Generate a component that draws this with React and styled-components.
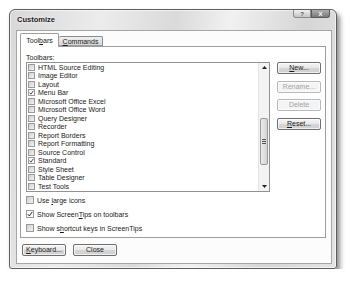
import styled, { createGlobalStyle } from "styled-components";

const Global = createGlobalStyle`
  body {
    margin: 0;
    background: #fff;
    font-family: "Liberation Sans", Arial, sans-serif;
    color: #1a1a1a;
  }
`;

const toolbars = [
  { name: "HTML Source Editing" },
  { name: "Image Editor" },
  { name: "Layout" },
  { name: "Menu Bar", on: true },
  { name: "Microsoft Office Excel" },
  { name: "Microsoft Office Word" },
  { name: "Query Designer" },
  { name: "Recorder" },
  { name: "Report Borders" },
  { name: "Report Formatting" },
  { name: "Source Control" },
  { name: "Standard", on: true },
  { name: "Style Sheet" },
  { name: "Table Designer" },
  { name: "Test Tools" },
];

const Page = styled.div`
  padding: 9px 0 0 9px;
`;

const Window = styled.div`
  width: 328px;
  height: 260px;
  box-sizing: border-box;
  border: 1px solid #5e5e5e;
  border-radius: 6px 6px 3px 3px;
  background: linear-gradient(
    100deg,
    #d8d8d8 0%,
    #ececec 25%,
    #dadada 45%,
    #f1f1f1 60%,
    #d6d6d6 80%,
    #e4e4e4 100%
  );
  box-shadow: 3px 4px 5px rgba(0, 0, 0, 0.45), inset 0 0 0 1px rgba(255, 255, 255, 0.6);
  display: flex;
  flex-direction: column;
  padding: 0 4px 4px 6px;
`;

const TitleBar = styled.div`
  height: 20px;
  display: flex;
  align-items: flex-start;
  justify-content: space-between;
`;

const Title = styled.div`
  padding: 5px 0 0 1px;
  font-size: 7.5px;
  font-weight: 700;
  line-height: 9px;
  color: #1c1c1c;
  text-shadow: 0 0 3px #fff;
`;

const Caption = styled.div`
  display: flex;
  margin-right: 2px;
`;

const CaptionButton = styled.div`
  width: ${({ w }) => w}px;
  height: 8px;
  box-sizing: border-box;
  border: 1px solid ${({ close }) => (close ? "#5a5a5a" : "#8c8c8c")};
  border-top: none;
  border-radius: ${({ close }) => (close ? "0 0 3px 0" : "0 0 0 3px")};
  background: ${({ close }) =>
    close ? "linear-gradient(#b0b0b0, #7a7a7a)" : "linear-gradient(#f0f0f0, #c4c4c4)"};
  display: flex;
  align-items: center;
  justify-content: center;
  font-size: 6px;
  font-weight: 700;
  color: ${({ close }) => (close ? "#fff" : "#555")};
  line-height: 6px;
`;

const Client = styled.div`
  flex: 1;
  border: 1px solid #a6a6a6;
  background: #fcfcfc;
  padding: 2px 5px 0 3px;
  display: flex;
  flex-direction: column;
`;

const Tabs = styled.div`
  height: 13px;
  display: flex;
  align-items: flex-end;
`;

const Tab = styled.div`
  box-sizing: border-box;
  width: ${({ w }) => w}px;
  height: ${({ active }) => (active ? 14 : 10)}px;
  margin-bottom: ${({ active }) => (active ? -1 : 0)}px;
  position: relative;
  z-index: ${({ active }) => (active ? 1 : 0)};
  border: 1px solid ${({ active }) => (active ? "#9d9d9d" : "#8a8a8a")};
  border-bottom: ${({ active }) => (active ? "none" : "1px solid #9d9d9d")};
  border-left: ${({ active }) => (active ? "1px solid #9d9d9d" : "none")};
  border-radius: 2px 2px 0 0;
  background: ${({ active }) => (active ? "#fff" : "linear-gradient(#f0f0f0, #d6d6d6)")};
  font-size: 7px;
  line-height: ${({ active }) => (active ? 13 : 9)}px;
  text-align: center;
`;

const Panel = styled.div`
  height: 192px;
  box-sizing: border-box;
  border: 1px solid #9d9d9d;
  background: #fff;
  padding: 6px 4px 0 5px;
  display: flex;
  flex-direction: column;
`;

const Label = styled.div`
  font-size: 7px;
  line-height: 9px;
  height: 9px;
`;

const ListArea = styled.div`
  display: flex;
  gap: 7px;
`;

const List = styled.div`
  width: 244px;
  height: 130px;
  box-sizing: border-box;
  border: 1px solid #8f9396;
  display: flex;
`;

const Items = styled.div`
  flex: 1;
  padding-left: 1px;
`;

const Item = styled.div`
  height: 8.53px;
  display: flex;
  align-items: center;
  gap: 3px;
  font-size: 7px;
  white-space: nowrap;
`;

const Box = styled.div`
  width: ${({ size }) => size}px;
  height: ${({ size }) => size}px;
  box-sizing: border-box;
  flex: none;
  border: 1px solid #9a9a9a;
  background: ${({ on }) => (on ? "#fafafa" : "linear-gradient(135deg, #cfcfcf, #f3f3f3)")};
  display: flex;
  align-items: center;
  justify-content: center;
`;

const Scrollbar = styled.div`
  width: 10px;
  display: flex;
  flex-direction: column;
  background: #f3f3f3;
  border-left: 1px solid #e4e4e4;
`;

const Arrow = styled.div`
  height: 9px;
  display: flex;
  align-items: center;
  justify-content: center;
`;

const Track = styled.div`
  flex: 1;
  padding-top: 46px;
`;

const Thumb = styled.div`
  height: 47px;
  margin: 0 1px;
  box-sizing: border-box;
  border: 1px solid #9a9a9a;
  border-radius: 2px;
  background: linear-gradient(90deg, #ececec, #d2d2d2);
  display: flex;
  align-items: center;
  justify-content: center;
`;

const Grip = styled.div`
  width: 4px;
  height: 5px;
  background: repeating-linear-gradient(#555 0 1px, transparent 1px 2px);
`;

const Side = styled.div`
  display: flex;
  flex-direction: column;
  gap: 6.5px;
`;

const Button = styled.div`
  width: 44px;
  height: 12px;
  box-sizing: border-box;
  border: 1px solid ${({ disabled }) => (disabled ? "#b5b9bc" : "#6f6f6f")};
  border-radius: 2px;
  background: ${({ disabled }) =>
    disabled ? "#f4f4f4" : "linear-gradient(#f4f4f4 0%, #e8e8e8 50%, #d6d6d6 51%, #cfcfcf 100%)"};
  box-shadow: inset 0 0 0 1px rgba(255, 255, 255, 0.7);
  color: ${({ disabled }) => (disabled ? "#a3a3a3" : "#1a1a1a")};
  font-size: 7px;
  line-height: 10px;
  text-align: center;
`;

const Options = styled.div`
  margin-top: 1px;
`;

const Option = styled.div`
  height: 14px;
  display: flex;
  align-items: center;
  gap: 3px;
  font-size: 7px;
`;

const Footer = styled.div`
  margin: 6px 0 0 2px;
  display: flex;
  gap: 7px;
`;

const Check = ({ size }) => (
  <svg width={size - 2} height={size - 2} viewBox="0 0 8 8">
    <path d="M1 4.2 L3.1 6.6 L7 1.2" fill="none" stroke="#222" strokeWidth="1.3" />
  </svg>
);

const Tri = ({ down }) => (
  <svg width="5" height="3" viewBox="0 0 5 3">
    <path d={down ? "M0 0 H5 L2.5 3 Z" : "M0 3 H5 L2.5 0 Z"} fill="#222" />
  </svg>
);

export default function App() {
  return (
    <Page>
      <Global />
      <Window>
        <TitleBar>
          <Title>Customize</Title>
          <Caption>
            <CaptionButton w={18}>?</CaptionButton>
            <CaptionButton w={19} close>
              X
            </CaptionButton>
          </Caption>
        </TitleBar>
        <Client>
          <Tabs>
            <Tab w={39} active>
              Tool<u>b</u>ars
            </Tab>
            <Tab w={44}>
              <u>C</u>ommands
            </Tab>
          </Tabs>
          <Panel>
            <Label>Toolbars:</Label>
            <ListArea>
              <List>
                <Items>
                  {toolbars.map((t) => (
                    <Item key={t.name}>
                      <Box size={7} on={t.on}>
                        {t.on && <Check size={7} />}
                      </Box>
                      <span>{t.name}</span>
                    </Item>
                  ))}
                </Items>
                <Scrollbar>
                  <Arrow>
                    <Tri />
                  </Arrow>
                  <Track>
                    <Thumb>
                      <Grip />
                    </Thumb>
                  </Track>
                  <Arrow>
                    <Tri down />
                  </Arrow>
                </Scrollbar>
              </List>
              <Side>
                <Button>
                  <u>N</u>ew...
                </Button>
                <Button disabled>Rename...</Button>
                <Button disabled>Delete</Button>
                <Button>
                  <u>R</u>eset...
                </Button>
              </Side>
            </ListArea>
            <Options>
              <Option>
                <Box size={8} />
                <span>
                  Use <u>l</u>arge icons
                </span>
              </Option>
              <Option>
                <Box size={8} on>
                  <Check size={8} />
                </Box>
                <span>
                  Show Screen<u>T</u>ips on toolbars
                </span>
              </Option>
              <Option>
                <Box size={8} />
                <span>
                  Show s<u>h</u>ortcut keys in ScreenTips
                </span>
              </Option>
            </Options>
          </Panel>
          <Footer>
            <Button>
              <u>K</u>eyboard...
            </Button>
            <Button>Close</Button>
          </Footer>
        </Client>
      </Window>
    </Page>
  );
}
